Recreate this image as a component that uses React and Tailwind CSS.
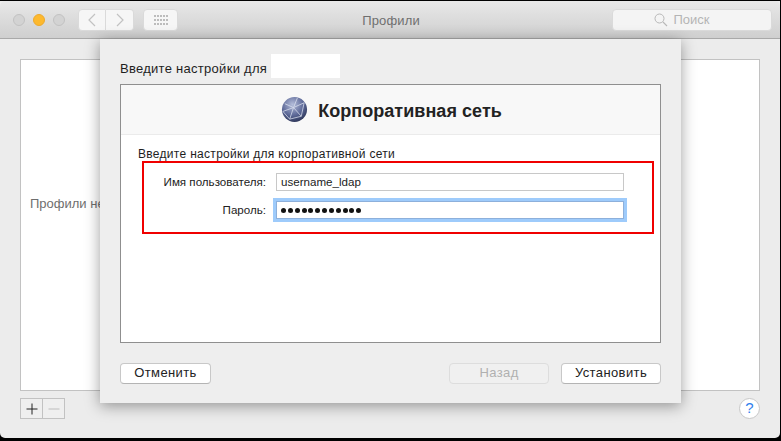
function Globe() {
  return (
    <svg width="27" height="27" viewBox="0 0 28 28" className="shrink-0">
      <defs>
        <radialGradient id="g" cx="0.42" cy="0.3" r="0.8">
          <stop offset="0" stopColor="#b4bdda" />
          <stop offset="0.55" stopColor="#5b6796" />
          <stop offset="1" stopColor="#1f2746" />
        </radialGradient>
      </defs>
      <circle cx="14" cy="14" r="13" fill="url(#g)" />
      <g stroke="#dfe4f2" strokeWidth="0.9" fill="none" opacity="0.85">
        <path d="M4 8 L13 12 L24 7" />
        <path d="M13 12 L9 24" />
        <path d="M13 12 L21 21 L9 24" />
        <path d="M17 2 L13 12" />
        <path d="M21 21 L24 7" />
        <path d="M2 16 L9 24" />
        <path d="M2 16 L13 12" />
      </g>
    </svg>
  );
}

function Btn({ children, className = "" }) {
  return (
    <div className={"h-[21px] flex items-center justify-center rounded-[4px] border text-[13px] tracking-[0.4px] " + className}>
      {children}
    </div>
  );
}

export default function App() {
  return (
    <div className="relative w-[781px] h-[441px] bg-black overflow-hidden font-['Liberation_Sans',sans-serif] pt-[1px] pb-[3px] pr-[1px]">
      <div className="h-full flex flex-col bg-[#ececec] rounded-b-[5px]">
        {/* Title bar */}
        <div className="h-[38px] shrink-0 flex items-center pl-[13px] pr-[8px] bg-gradient-to-b from-[#e8e8e8] to-[#cfcfcf] border-b border-[#a9a9a9] rounded-t-[5px]">
          <div className="flex gap-2">
            <div className="w-3 h-3 rounded-full bg-[#d3d3d3] border border-[#c2c2c2]" />
            <div className="w-3 h-3 rounded-full bg-[#fdb92e] border border-[#eda92c]" />
            <div className="w-3 h-3 rounded-full bg-[#d3d3d3] border border-[#c2c2c2]" />
          </div>
          <div className="ml-[13px] flex h-[22px]">
            <div className="w-[28px] flex items-center justify-center bg-[#f6f6f6] border border-[#dadada] rounded-l-[4px]">
              <svg width="10" height="14" viewBox="0 0 10 14"><path d="M8 1 L2 7 L8 13" fill="none" stroke="#c2c2c2" strokeWidth="1.2" /></svg>
            </div>
            <div className="w-[28px] flex items-center justify-center bg-[#f6f6f6] border border-l-0 border-[#dadada] rounded-r-[4px]">
              <svg width="10" height="14" viewBox="0 0 10 14"><path d="M2 1 L8 7 L2 13" fill="none" stroke="#c2c2c2" strokeWidth="1.2" /></svg>
            </div>
          </div>
          <div className="ml-[9px] w-[35px] h-[22px] flex items-center justify-center bg-[#f6f6f6] border border-[#dadada] rounded-[4px]">
            <div className="grid grid-cols-5 gap-x-[1px] gap-y-[2px]">
              {Array.from({ length: 15 }).map((_, i) => (
                <div key={i} className="w-[2px] h-[2px] bg-[#bcbcbc]" />
              ))}
            </div>
          </div>
          <div className="flex-1 text-center text-[13px] tracking-[0.15px] text-[#6f6f6f] pr-[8px] pt-[2px]">Профили</div>
          <div className="w-[160px] h-[22px] flex items-center justify-center gap-[5px] bg-[#f4f4f4] border border-[#dadada] rounded-[4px] text-[13px] text-[#b4b4b4] font-medium pr-[20px]">
            <svg width="14" height="14" viewBox="0 0 14 14"><circle cx="5.5" cy="5.5" r="4.5" fill="none" stroke="#b8b8b8" strokeWidth="1" /><path d="M9 9 L13 13" stroke="#b8b8b8" strokeWidth="1.1" /></svg>
            <span className="pt-[1px]">Поиск</span>
          </div>
        </div>

        {/* Body */}
        <div className="flex-1 flex flex-col pl-[20px] pr-[20px] pt-[20px] pb-[19px]">
          <div className="flex-1 bg-white border border-[#c2c2c2] flex items-center pl-[9px] text-[13px] text-[#6e6e6e] pb-[42px]">
            Профили не установлены
          </div>
          <div className="mt-[7px] flex items-center justify-between">
            <div className="flex h-[21px] border border-[#c2c2c2] bg-[#efefef]">
              <div className="w-[22px] flex items-center justify-center border-r border-[#c2c2c2]">
                <svg width="12" height="12" viewBox="0 0 12 12"><path d="M6 0.5V11.5M0.5 6H11.5" stroke="#222" strokeWidth="1" /></svg>
              </div>
              <div className="w-[21px] flex items-center justify-center">
                <svg width="12" height="12" viewBox="0 0 12 12"><path d="M0.5 6H11.5" stroke="#bdbdbd" strokeWidth="1" /></svg>
              </div>
            </div>
            <div className="w-[21px] h-[21px] rounded-full bg-white border border-[#c8c8c8] flex items-center justify-center text-[15px] text-[#2f80ed] font-medium">?</div>
          </div>
        </div>
      </div>

      {/* Sheet */}
      <div className="absolute left-[100px] top-[39px] w-[581px] h-[364px] bg-[#eeeeee] shadow-[0_3px_14px_rgba(0,0,0,0.38)] flex flex-col px-[20px]">
        <div className="h-[45px] shrink-0 flex items-center text-[13px] tracking-[0.28px] text-[#1e1e1e] pt-[9px]">
          <span className="mt-[5px]">Введите настройки для</span>
          <div className="ml-[4px] w-[69px] h-[24px] bg-white" />
        </div>
        <div className="h-[259px] shrink-0 bg-white border border-[#8f8f8f] flex flex-col">
          <div className="h-[50px] shrink-0 bg-[#f8f8f8] border-b border-[#ebebeb] flex items-center justify-center gap-[10px] pl-[2px]">
            <Globe />
            <span className="text-[18px] font-bold text-[#222] tracking-[0.05px] pt-[3px]">Корпоративная сеть</span>
          </div>
          <div className="pl-[17px] pt-[12px] text-[12px] tracking-[0.3px] leading-[15px] text-[#1e1e1e]">
            Введите настройки для корпоративной сети
          </div>
          <div className="mt-[11px] ml-[155px] mr-[36px] flex flex-col gap-[10px]">
            <div className="relative h-[18px] bg-white border border-[#c8c8c8] flex items-center pl-[4px] text-[11.6px] text-[#222]">
              <span className="absolute right-[calc(100%+11px)] whitespace-nowrap text-[#222]">Имя пользователя:</span>
              username_ldap
            </div>
            <div className="relative h-[18px] bg-white border border-[#8db0db] outline-[3px] outline-[#9ecbfb] flex items-center pl-[4px] text-[11.6px]">
              <span className="absolute right-[calc(100%+11px)] whitespace-nowrap text-[#222]">Пароль:</span>
              <div className="flex gap-[1.85px]">
                {Array.from({ length: 12 }).map((_, i) => (
                  <div key={i} className="w-[5px] h-[5px] rounded-full bg-[#111]" />
                ))}
              </div>
            </div>
          </div>
        </div>
        <div className="flex-1 flex items-center justify-between">
          <Btn className="w-[91px] bg-white border-[#c8c8c8] border-b-[#b4b4b4] text-[#222]">Отменить</Btn>
          <div className="flex gap-[12px]">
            <Btn className="w-[100px] bg-[#f0f0f0] border-[#dddddd] text-[#b0b0b0]">Назад</Btn>
            <Btn className="w-[100px] bg-white border-[#c8c8c8] border-b-[#b4b4b4] text-[#222]">Установить</Btn>
          </div>
        </div>
      </div>

      {/* Red annotation */}
      <div className="absolute left-[142px] top-[161px] w-[512px] h-[73px] border-[2px] border-[#f00000]" />
    </div>
  );
}
